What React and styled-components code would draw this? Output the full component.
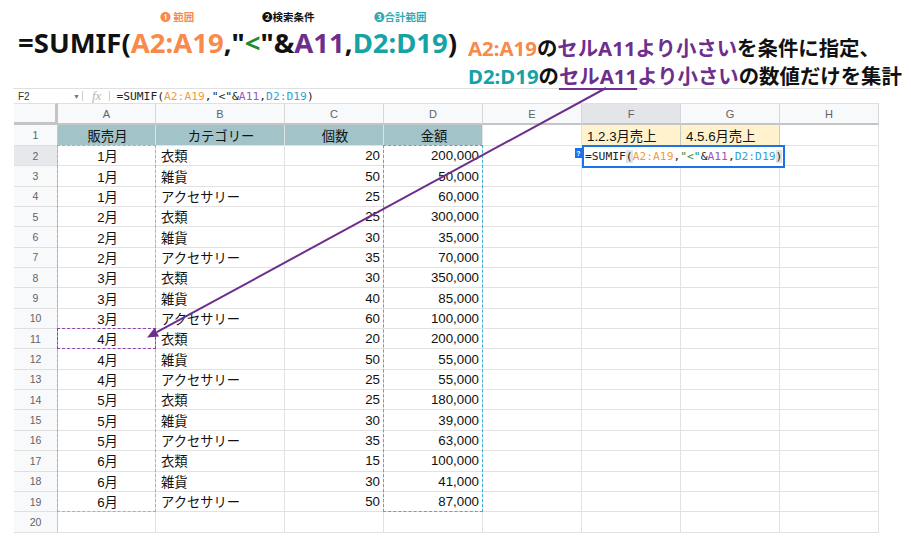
import React from "react";
import styled, { createGlobalStyle } from "styled-components";

const GlobalStyle = createGlobalStyle`
  html, body { margin: 0; padding: 0; background: #fff; }
  body { font-family: "Liberation Sans", "Noto Sans CJK JP", sans-serif; }
`;

const ORANGE = "#f78a4c";
const PURPLE = "#6d2e8d";
const TEAL = "#17a2a6";
const GREEN = "#218a2f";

const COLS = "44px 98px 129px 99px 99px 99px 99px 99px 99px";
const ROWS = "22px 21px repeat(19, 20.35px)";

const Page = styled.div`
  position: relative;
  width: 911px;
  height: 544px;
  overflow: hidden;
  background: #fff;
`;

const Header = styled.div`
  display: grid;
  grid-template-columns: 468px 1fr;
  height: 88px;
`;

const TitleBlock = styled.div`
  padding: 11px 0 0 18px;
`;

const Formula = styled.div`
  display: flex;
  align-items: flex-end;
  font-family: "Noto Sans", "Noto Sans CJK JP", sans-serif;
  font-weight: 700;
  font-size: 27.5px;
  line-height: 32px;
  color: #111;
  white-space: pre;
`;

const Seg = styled.span`
  display: inline-flex;
  flex-direction: column;
  align-items: center;
  gap: 4px;
  color: ${(p) => p.$color || "#111"};
`;

const Label = styled.span`
  font-family: "Noto Sans CJK JP", sans-serif;
  font-size: 10.5px;
  font-weight: 700;
  line-height: 12px;
  color: ${(p) => p.$color};
`;

const Explain = styled.div`
  padding-top: 34px;
  font-family: "Noto Sans", "Noto Sans CJK JP", sans-serif;
  font-weight: 700;
  font-size: 20.4px;
  line-height: 28px;
  color: #111;
  white-space: nowrap;
`;

const Em = styled.span`
  color: ${(p) => p.$color};
  ${(p) =>
    p.$under &&
    `text-decoration: underline; text-decoration-thickness: 2px; text-underline-offset: 4px;`}
`;

const Bar = styled.div`
  box-sizing: border-box;
  margin-left: 13px;
  width: 868px;
  height: 15px;
  border-top: 1px solid #e0e0e0;
  display: flex;
  align-items: center;
  font-size: 10px;
  color: #333;
`;

const CellRef = styled.span`
  width: 55px;
  padding-left: 5px;
`;

const Caret = styled.span`
  font-size: 7px;
  color: #777;
  width: 9px;
`;

const Divider = styled.span`
  width: 1px;
  height: 10px;
  background: #ccc;
`;

const Fx = styled.span`
  font-family: "Liberation Serif", serif;
  font-style: italic;
  font-size: 13px;
  color: #b5b5b5;
  padding: 0 8px 0 9px;
`;

const BarText = styled.span`
  padding-left: 6px;
  font-family: "DejaVu Sans Mono", monospace;
  font-size: 11.3px;
  white-space: pre;
  color: #222;
`;

const Tok = styled.span`
  color: ${(p) => p.$c || "inherit"};
  background: ${(p) => p.$bg || "transparent"};
`;

const SheetWrap = styled.div`
  position: relative;
  margin-left: 14px;
  width: 865px;
`;

const Sheet = styled.div`
  display: grid;
  grid-template-columns: ${COLS};
  grid-template-rows: ${ROWS};
`;

const Cell = styled.div`
  box-sizing: border-box;
  display: flex;
  align-items: center;
  justify-content: ${(p) =>
    p.$align === "right" ? "flex-end" : p.$align === "center" ? "center" : "flex-start"};
  padding: 0 3px 0 5px;
  border-right: 1px solid ${(p) => p.$line || "#e2e2e2"};
  border-bottom: 1px solid ${(p) => p.$line || "#e2e2e2"};
  background: ${(p) => p.$bg || "#fff"};
  font-size: 13.3px;
  color: #111;
  white-space: nowrap;
  overflow: hidden;
`;

const ColHead = styled.div`
  box-sizing: border-box;
  display: flex;
  align-items: center;
  justify-content: center;
  border-top: 1px solid #e0e0e0;
  border-right: 1px solid #d6d6d6;
  border-bottom: 2px solid #c4c4c4;
  background: ${(p) => (p.$active ? "#e3e5e8" : "#f8f9fa")};
  font-size: 11px;
  color: #5f6368;
`;

const Corner = styled(ColHead)`
  border-right: 3px solid #c4c4c4;
  border-bottom: 3px solid #c4c4c4;
`;

const RowHead = styled.div`
  box-sizing: border-box;
  display: flex;
  align-items: center;
  justify-content: center;
  border-right: 1px solid #c8c8c8;
  border-bottom: 1px solid #e0e0e0;
  background: ${(p) => (p.$active ? "#e6e8eb" : "#f8f9fa")};
  font-size: 10.5px;
  color: #5f6368;
`;

const Overlay = styled.div`
  position: absolute;
  inset: 0;
  display: grid;
  grid-template-columns: ${COLS};
  grid-template-rows: ${ROWS};
  pointer-events: none;
`;

const Selection = styled.div`
  grid-column: ${(p) => p.$col};
  grid-row: ${(p) => p.$rows};
  border: 1px dashed ${(p) => p.$color};
  margin: -1px 0 0 -1px;
`;

const Editor = styled.div`
  grid-column: 7;
  grid-row: 3;
  justify-self: start;
  align-self: start;
  position: relative;
  box-sizing: border-box;
  height: 23px;
  margin-top: -1px;
  padding: 0 1px 0 1px;
  display: flex;
  align-items: center;
  background: #fff;
  border: 2px solid #1a73e8;
  font-family: "DejaVu Sans Mono", monospace;
  font-size: 11.3px;
  color: #222;
  white-space: pre;
`;

const Badge = styled.span`
  position: absolute;
  left: -9px;
  top: 1px;
  width: 7px;
  height: 10px;
  background: #1a73e8;
  color: #fff;
  font-family: "Liberation Sans", sans-serif;
  font-size: 7px;
  font-weight: 700;
  display: flex;
  align-items: center;
  justify-content: center;
`;

const ArrowLayer = styled.svg`
  position: absolute;
  left: 0;
  top: 0;
  pointer-events: none;
`;

const data = [
  ["1月", "衣類", "20", "200,000"],
  ["1月", "雑貨", "50", "50,000"],
  ["1月", "アクセサリー", "25", "60,000"],
  ["2月", "衣類", "25", "300,000"],
  ["2月", "雑貨", "30", "35,000"],
  ["2月", "アクセサリー", "35", "70,000"],
  ["3月", "衣類", "30", "350,000"],
  ["3月", "雑貨", "40", "85,000"],
  ["3月", "アクセサリー", "60", "100,000"],
  ["4月", "衣類", "20", "200,000"],
  ["4月", "雑貨", "50", "55,000"],
  ["4月", "アクセサリー", "25", "55,000"],
  ["5月", "衣類", "25", "180,000"],
  ["5月", "雑貨", "30", "39,000"],
  ["5月", "アクセサリー", "35", "63,000"],
  ["6月", "衣類", "15", "100,000"],
  ["6月", "雑貨", "30", "41,000"],
  ["6月", "アクセサリー", "50", "87,000"],
];

const letters = ["A", "B", "C", "D", "E", "F", "G", "H"];
const HEAD_BG = "#a2c4c9";
const YELLOW = "#fff2cc";

function FormulaTokens({ str, paren }) {
  return (
    <>
      =SUMIF
      <Tok $bg={paren}>(</Tok>
      <Tok $c="#f39b3c">A2:A19</Tok>,<Tok $c={str}>"&lt;"</Tok>&amp;
      <Tok $c="#9b58b6">A11</Tok>,<Tok $c="#2ea3d4">D2:D19</Tok>
      <Tok $bg={paren}>)</Tok>
    </>
  );
}

export default function App() {
  const rows = [];
  for (let r = 1; r <= 20; r++) {
    rows.push(
      <RowHead key={`h${r}`} $active={r === 2}>
        {r}
      </RowHead>
    );
    let vals = ["", "", "", "", "", "", "", ""];
    if (r === 1) vals = ["販売月", "カテゴリー", "個数", "金額", "", "1.2.3月売上", "4.5.6月売上", ""];
    else if (r <= 19) vals = [...data[r - 2], "", "", "", ""];
    vals.forEach((v, c) => {
      let align = "left";
      let bg;
      let line;
      if (r === 1 && c < 4) {
        align = "center";
        bg = HEAD_BG;
      } else if (r === 1 && (c === 5 || c === 6)) {
        bg = YELLOW;
        line = "#c9c9c9";
      } else if (c === 0) align = "center";
      else if (c === 2 || c === 3) align = "right";
      rows.push(
        <Cell key={`${r}-${c}`} $align={align} $bg={bg} $line={line}>
          {v}
        </Cell>
      );
    });
  }

  return (
    <Page>
      <GlobalStyle />
      <Header>
        <TitleBlock>
          <Formula>
            =SUMIF(
            <Seg $color={ORANGE}>
              <Label $color={ORANGE}>❶ 範囲</Label>
              A2:A19
            </Seg>
            ,
            <Seg>
              <Label $color="#111">❷検索条件</Label>
              <span>
                "<Em $color={GREEN}>&lt;</Em>"&amp;<Em $color={PURPLE}>A11</Em>
              </span>
            </Seg>
            ,
            <Seg $color={TEAL}>
              <Label $color="#35a9b0">❸合計範囲</Label>
              D2:D19
            </Seg>
            )
          </Formula>
        </TitleBlock>
        <Explain>
          <div>
            <Em $color={ORANGE}>A2:A19</Em>の<Em $color={PURPLE}>セルA11より小さい</Em>を条件に指定、
          </div>
          <div>
            <Em $color={TEAL}>D2:D19</Em>の
            <Em $color={PURPLE} $under>
              セルA11
            </Em>
            <Em $color={PURPLE}>より小さい</Em>の数値だけを集計
          </div>
        </Explain>
      </Header>

      <Bar>
        <CellRef>F2</CellRef>
        <Caret>▼</Caret>
        <Divider />
        <Fx>fx</Fx>
        <Divider />
        <BarText>
          <FormulaTokens str="#222" />
        </BarText>
      </Bar>

      <SheetWrap>
        <Sheet>
          <Corner />
          {letters.map((l) => (
            <ColHead key={l} $active={l === "F"}>
              {l}
            </ColHead>
          ))}
          {rows}
        </Sheet>
        <Overlay>
          <Selection $col="2" $rows="3 / 21" $color="#f5a234" />
          <Selection $col="5" $rows="3 / 21" $color="#3bb2dc" />
          <Selection $col="2" $rows="12" $color="#8e44ad" />
          <Editor>
            <Badge>?</Badge>
            <FormulaTokens str="#1e8e3e" paren="#e3e3e3" />
          </Editor>
        </Overlay>
      </SheetWrap>

      <ArrowLayer width="911" height="544" viewBox="0 0 911 544">
        <line x1="606" y1="88" x2="156.8" y2="332.2" stroke={PURPLE} strokeWidth="2" />
        <polygon points="147,337.5 159,336.4 154.5,328" fill={PURPLE} />
      </ArrowLayer>
    </Page>
  );
}
